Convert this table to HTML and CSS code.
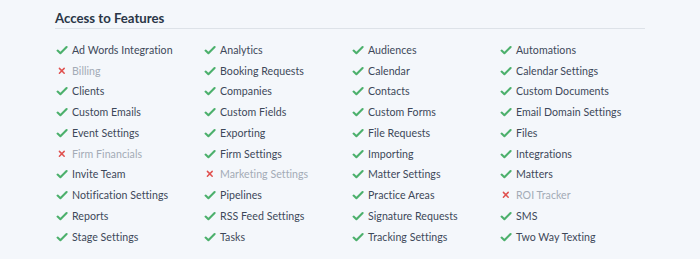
FILE: index.html
```html
<!DOCTYPE html>
<html>
<head>
<meta charset="utf-8">
<link rel="stylesheet" href="styles.css">
</head>
<body>
<section class="panel">
  <h2 class="title">Access to Features</h2>
  <ul class="grid">
    <li class="on"><span class="ic"></span>Ad Words Integration</li>
    <li class="on"><span class="ic"></span>Analytics</li>
    <li class="on"><span class="ic"></span>Audiences</li>
    <li class="on"><span class="ic"></span>Automations</li>
    <li class="off"><span class="ic"></span>Billing</li>
    <li class="on"><span class="ic"></span>Booking Requests</li>
    <li class="on"><span class="ic"></span>Calendar</li>
    <li class="on"><span class="ic"></span>Calendar Settings</li>
    <li class="on"><span class="ic"></span>Clients</li>
    <li class="on"><span class="ic"></span>Companies</li>
    <li class="on"><span class="ic"></span>Contacts</li>
    <li class="on"><span class="ic"></span>Custom Documents</li>
    <li class="on"><span class="ic"></span>Custom Emails</li>
    <li class="on"><span class="ic"></span>Custom Fields</li>
    <li class="on"><span class="ic"></span>Custom Forms</li>
    <li class="on"><span class="ic"></span>Email Domain Settings</li>
    <li class="on"><span class="ic"></span>Event Settings</li>
    <li class="on"><span class="ic"></span>Exporting</li>
    <li class="on"><span class="ic"></span>File Requests</li>
    <li class="on"><span class="ic"></span>Files</li>
    <li class="off"><span class="ic"></span>Firm Financials</li>
    <li class="on"><span class="ic"></span>Firm Settings</li>
    <li class="on"><span class="ic"></span>Importing</li>
    <li class="on"><span class="ic"></span>Integrations</li>
    <li class="on"><span class="ic"></span>Invite Team</li>
    <li class="off"><span class="ic"></span>Marketing Settings</li>
    <li class="on"><span class="ic"></span>Matter Settings</li>
    <li class="on"><span class="ic"></span>Matters</li>
    <li class="on"><span class="ic"></span>Notification Settings</li>
    <li class="on"><span class="ic"></span>Pipelines</li>
    <li class="on"><span class="ic"></span>Practice Areas</li>
    <li class="off"><span class="ic"></span>ROI Tracker</li>
    <li class="on"><span class="ic"></span>Reports</li>
    <li class="on"><span class="ic"></span>RSS Feed Settings</li>
    <li class="on"><span class="ic"></span>Signature Requests</li>
    <li class="on"><span class="ic"></span>SMS</li>
    <li class="on"><span class="ic"></span>Stage Settings</li>
    <li class="on"><span class="ic"></span>Tasks</li>
    <li class="on"><span class="ic"></span>Tracking Settings</li>
    <li class="on"><span class="ic"></span>Two Way Texting</li>
  </ul>
</section>
</body>
</html>
```
FILE: styles.css
```css
html, body {
  margin: 0;
  padding: 0;
  background: #f4f7fb;
}
body {
  font-family: Lato, "Open Sans", sans-serif;
  color: #3d4859;
}
.panel {
  width: 590px;
  margin: 0 0 0 55px;
  padding-top: 9px;
}
.title {
  margin: 0;
  font-size: 13.2px;
  font-weight: 700;
  color: #2a3647;
  line-height: 18px;
  border-bottom: 1px solid #dde2e8;
  height: 19px;
}
.grid {
  list-style: none;
  margin: 0;
  padding: 10.5px 0 0 0;
  display: grid;
  grid-template-columns: repeat(4, 148px);
  grid-auto-rows: 20.75px;
}
.grid li {
  display: flex;
  align-items: center;
  font-size: 10.6px;
  letter-spacing: 0.05px;
  white-space: nowrap;
}
.ic {
  width: 12px;
  height: 12px;
  margin: 0 4px 0 1px;
  flex: none;
}
.on .ic {
  background: no-repeat center/12px 12px url("data:image/svg+xml,%3Csvg xmlns='http://www.w3.org/2000/svg' viewBox='0 0 12 12'%3E%3Cpath d='M1.6 6.6 L4.4 9.2 L10.6 3' fill='none' stroke='%234cb06c' stroke-width='2.1' stroke-linecap='round' stroke-linejoin='round'/%3E%3C/svg%3E");
}
.off .ic {
  background: no-repeat center/12px 12px url("data:image/svg+xml,%3Csvg xmlns='http://www.w3.org/2000/svg' viewBox='0 0 12 12'%3E%3Cpath d='M3.4 3.4 L8.2 8.2 M8.2 3.4 L3.4 8.2' fill='none' stroke='%23e0514f' stroke-width='1.5' stroke-linecap='round'/%3E%3C/svg%3E");
}
.off {
  color: #a3abb6;
}
```
